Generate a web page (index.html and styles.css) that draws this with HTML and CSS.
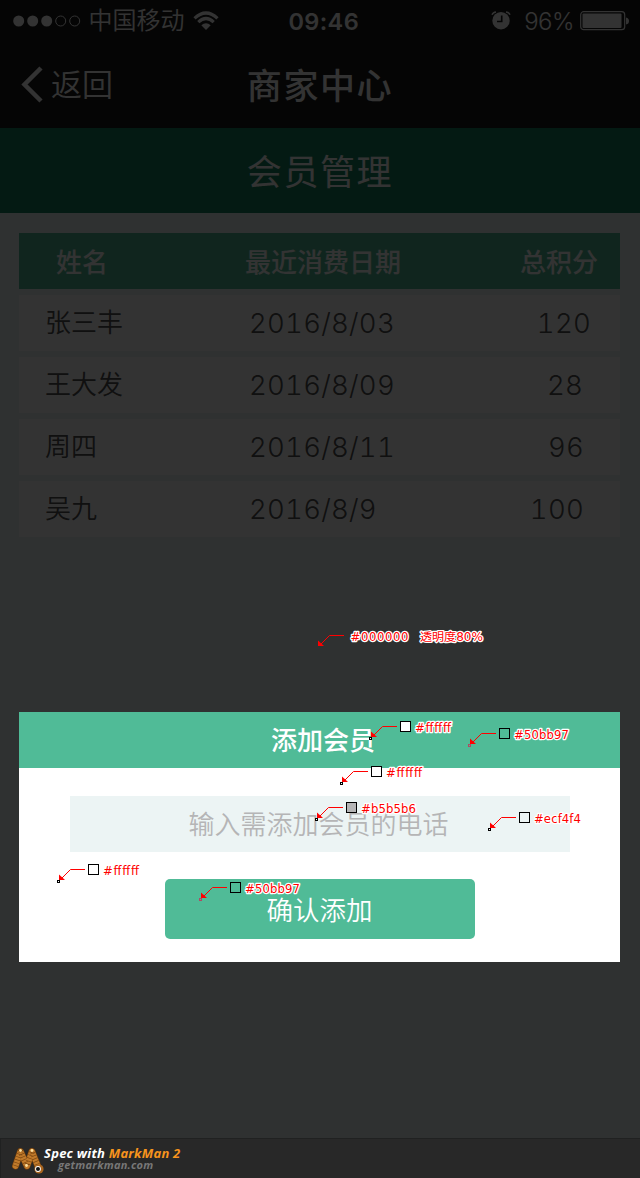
FILE: index.html
```html
<!DOCTYPE html>
<html lang="zh-CN">
<head>
<meta charset="utf-8">
<title>会员管理</title>
<link rel="stylesheet" href="styles.css">
</head>
<body>
<div class="screen">
  <header class="topbar">
    <div class="status">
      <div class="status-left">
        <svg class="signal" width="68" height="12" viewBox="0 0 68 12"><g fill="#fff"><circle cx="5.7" cy="6" r="5.5"/><circle cx="19.7" cy="6" r="5.5"/><circle cx="33.7" cy="6" r="5.5"/></g><g fill="none" stroke="#fff"><circle cx="47.7" cy="6" r="5"/><circle cx="61.7" cy="6" r="5"/></g></svg>
        <span class="carrier">中国移动</span>
        <svg class="wifi" width="26" height="20" viewBox="0 0 26 20"><g fill="none" stroke="#fff" stroke-width="3.200"><path d="M1.500 7.400Q13-3.400 24.500 7.400"/><path d="M5.300 11.200Q13 3.900 20.700 11.200"/></g><path d="M8.300 14.300Q13 10.300 17.700 14.300L13 19Z" fill="#fff"/></svg>
      </div>
      <div class="clock">09:46</div>
      <div class="status-right">
        <svg class="alarm" width="20" height="19" viewBox="0 0 20 19"><circle cx="10" cy="9.700" r="8.700" fill="#fff"/><path d="M10.700 4.500V10.500H6" fill="none" stroke="#191919" stroke-width="1.700"/><path d="M1 3.800Q2 1.200 5 1M15 1Q18 1.200 19 3.800" fill="none" stroke="#fff" stroke-width="1.500"/></svg>
        <span class="percent">96%</span>
        <svg class="battery" width="50" height="20" viewBox="0 0 50 20"><rect x=".7" y=".7" width="44" height="18" rx="3" fill="none" stroke="#fff" stroke-width="1.200"/><rect x="2.500" y="2.500" width="39" height="14.500" rx="1" fill="#fff"/><path d="M46 6.500q3 .5 3 3.500t-3 3.500z" fill="#fff"/></svg>
      </div>
    </div>
    <nav class="nav">
      <a class="back"><svg width="23" height="38" viewBox="0 0 23 38"><path d="M20 2L3.500 18.500L20 35" fill="none" stroke="#fff" stroke-width="4.500"/></svg><span>返回</span></a>
      <h1 class="nav-title">商家中心</h1>
      <span></span>
    </nav>
  </header>
  <h2 class="subtitle">会员管理</h2>
  <main class="members">
    <div class="row row-head"><span class="name">姓名</span><span class="date">最近消费日期</span><span class="points">总积分</span></div>
    <div class="row"><span class="name">张三丰</span><span class="date">2016/8/03</span><span class="points p1">120</span></div>
    <div class="row"><span class="name">王大发</span><span class="date">2016/8/09</span><span class="points p2">28</span></div>
    <div class="row"><span class="name">周四</span><span class="date">2016/8/11</span><span class="points p3">96</span></div>
    <div class="row"><span class="name">吴九</span><span class="date">2016/8/9</span><span class="points p3">100</span></div>
  </main>
</div>

<div class="mask">
  <section class="dialog">
    <h3 class="dialog-title">添加会员</h3>
    <div class="dialog-body">
      <div class="field">输入需添加会员的电话</div>
      <div class="confirm">确认添加</div>
    </div>
  </section>
  <footer class="brand">
    <svg class="worm" width="34" height="30" viewBox="0 0 34 30"><g fill="none" stroke-linecap="round" stroke-linejoin="round"><path d="M4.500 20L9.500 5.500L16 20L21 5.500L28 23" stroke="#6e3d0c" stroke-width="7"/><path d="M4.500 20L9.500 5.500L16 20L21 5.500L28 23" stroke="#c07a2b" stroke-width="5.800"/><path d="M4.500 20L9.500 5.500L16 20L21 5.500L28 23" stroke="#7d4811" stroke-width="5.800" stroke-dasharray=".7 2.300" stroke-linecap="butt"/></g><circle cx="9.500" cy="4.500" r="1.400" fill="#ffe2a0"/><circle cx="21" cy="4.500" r="1.400" fill="#ffe2a0"/><circle cx="15.500" cy="19.500" r="1.400" fill="#ffe2a0"/><circle cx="28" cy="23" r="4.600" fill="#a9651f"/><circle cx="27" cy="23" r="2.900" fill="#fff"/><circle cx="27" cy="23" r="2" fill="#111"/></svg>
    <div class="brand-text"><div class="brand-main">Spec with <b>MarkMan 2</b></div><div class="brand-url">getmarkman.com</div></div>
  </footer>
</div>

<svg class="notes" width="640" height="1178" viewBox="0 0 640 1178">
  <defs>
    <g id="arrow"><path d="M28 5.500H13.500L4 15" fill="none" stroke="#f00"/><path d="M2 10.500V16H8Z" fill="#f00"/></g>
    <rect id="swatch" x="31.500" y=".5" width="10" height="10" stroke="#000"/>
    <rect id="point" x=".5" y="16.500" width="2" height="2"/>
  </defs>
  <g transform="translate(316 630)"><use href="#arrow"/><text x="34.500" y="11" textLength="58">#000000</text><text x="104" y="11" textLength="63" lengthAdjust="spacingAndGlyphs">透明度80%</text></g>
  <g transform="translate(369 721)"><use href="#arrow"/><use href="#swatch" fill="#fff"/><use href="#point" class="dark"/><text x="46" y="11" textLength="36">#ffffff</text></g>
  <g transform="translate(468 728)"><use href="#arrow"/><use href="#swatch" fill="#50bb97"/><use href="#point" class="muted"/><text x="46" y="11" textLength="55">#50bb97</text></g>
  <g transform="translate(340 766)"><use href="#arrow"/><use href="#swatch" fill="#fff"/><use href="#point" class="dark"/><text x="46" y="11" textLength="36">#ffffff</text></g>
  <g transform="translate(315 802)"><use href="#arrow"/><use href="#swatch" fill="#b5b5b6"/><use href="#point" class="dark"/><text x="46" y="11" textLength="55">#b5b5b6</text></g>
  <g transform="translate(488 812)"><use href="#arrow"/><use href="#swatch" fill="#ecf4f4"/><use href="#point" class="dark"/><text x="46" y="11" textLength="47">#ecf4f4</text></g>
  <g transform="translate(57 864)"><use href="#arrow"/><use href="#swatch" fill="#fff"/><use href="#point" class="dark"/><text x="46" y="11" textLength="36">#ffffff</text></g>
  <g transform="translate(199 882)"><use href="#arrow"/><use href="#swatch" fill="#50bb97"/><use href="#point" class="muted"/><text x="46" y="11" textLength="55">#50bb97</text></g>
</svg>
</body>
</html>
```
FILE: styles.css
```css
* { box-sizing: border-box; }
body {
  margin: 0;
  position: relative;
  width: 640px;
  height: 1178px;
  overflow: hidden;
  font-family: Inter, "Noto Sans CJK SC", sans-serif;
  white-space: nowrap;
}
h1, h2, h3 { margin: 0; font-weight: 500; }
svg { display: block; flex: none; }
.screen { height: 1178px; background: #ecf4f4; }

.topbar { height: 128px; background: #191919; color: #fff; }
.status {
  display: grid;
  grid-template-columns: 1fr auto 1fr;
  height: 41px;
  padding: 0 11px 0 12.500px;
  align-items: center;
}
.status-left, .status-right { display: flex; align-items: center; }
.status-right { justify-content: flex-end; }
.carrier { padding-top: 1px; margin-left: 8px; font-size: 24px; font-weight: 350; line-height: 40px; }
.wifi { margin-left: 8px; }
.clock { padding: 1px 0 0 6px; font-size: 23.500px; font-weight: 600; letter-spacing: .4px; }
.percent { margin: 0 6px 0 13px; padding-top: 1px; font-size: 24px; font-weight: 350; letter-spacing: -.5px; }
.battery { margin-right: -1px; }

.nav {
  display: grid;
  grid-template-columns: 1fr auto 1fr;
  height: 87px;
  padding-left: 21px;
  padding-right: 21px;
  align-items: center;
}
.back { display: flex; align-items: center; gap: 7px; font-size: 31px; font-weight: 350; line-height: 44px; }
.nav-title { padding-top: 3px; font-size: 35px; letter-spacing: 1.600px; line-height: 50px; }
.subtitle {
  height: 85px;
  background: #14825f;
  color: #fff;
  font-size: 35px;
  font-weight: 400;
  letter-spacing: 1.600px;
  line-height: 88px;
  text-align: center;
}

.members { display: flex; flex-direction: column; gap: 6px; padding: 20px 20px 0 19px; }
.row {
  display: grid;
  grid-template-columns: 230px 1fr 150px;
  height: 56px;
  align-items: start;
  background: #fff;
  color: #505050;
  font-size: 26px;
  font-weight: 350;
  line-height: 56px;
}
.row-head { background: #50bb97; color: #fff; font-weight: 500; line-height: 59px; }
.name { padding-left: 26px; }
.row-head .name { padding-left: 37px; }
.row-head .date { margin-left: -4px; }
.row:not(.row-head) .date, .row:not(.row-head) .points {
  font-size: 27.500px;
  font-weight: 300;
  font-variant-numeric: tabular-nums;
  letter-spacing: .25px;
  line-height: 56px;
}
.points { text-align: right; padding-right: 22px; }
.p1 { padding-right: 29px; }
.p2 { padding-right: 37px; }
.p3 { padding-right: 36px; }

.mask {
  position: absolute;
  inset: 0;
  display: flex;
  flex-direction: column;
  justify-content: space-between;
  padding-top: 712px;
  background: rgba(0, 0, 0, .8);
}
.dialog { margin: 0 20px 0 19px; height: 250px; background: #fff; }
.dialog-title {
  height: 56px;
  background: #50bb97;
  color: #fff;
  font-size: 26px;
  line-height: 58px;
  padding-left: 7px;
  text-align: center;
}
.dialog-body {
  display: flex;
  flex-direction: column;
  align-items: center;
  gap: 27px;
  padding-top: 28px;
  font-size: 26px;
  font-weight: 350;
  text-align: center;
}
.field { width: 500px; height: 56px; padding-right: 2px; background: #ecf4f4; color: #b5b5b6; line-height: 58px; }
.confirm { width: 310px; height: 60px; border-radius: 5px; background: #50bb97; color: #fff; font-size: 26.500px; line-height: 62px; }

.brand {
  display: flex;
  height: 40px;
  padding: 7px 0 0 10px;
  border-top: 1px solid #202121;
  border-left: 1px solid #202121;
  background: #282828;
  font-family: "Open Sans", "Noto Sans", sans-serif;
  font-style: italic;
}
.brand-text { margin-left: -1px; }
.brand-main { height: 13px; color: #fff; font-size: 13px; font-weight: 700; letter-spacing: .25px; line-height: 14px; }
.brand-main b { font-weight: 700; color: #f7941d; }
.brand-url { padding-left: 14px; color: #777; font-size: 11px; font-weight: 700; letter-spacing: .25px; line-height: 11px; }

.notes { position: absolute; left: 0; top: 0; }
.notes text {
  fill: #f00;
  stroke: #fff;
  stroke-width: 2.500px;
  stroke-linejoin: round;
  paint-order: stroke;
  font-family: "DejaVu Sans", "Noto Sans CJK SC", sans-serif;
  font-size: 11.700px;
}
.dark { fill: #fff; stroke: #000; }
.muted { fill: #50bb97; stroke: #b04a64; }
```
